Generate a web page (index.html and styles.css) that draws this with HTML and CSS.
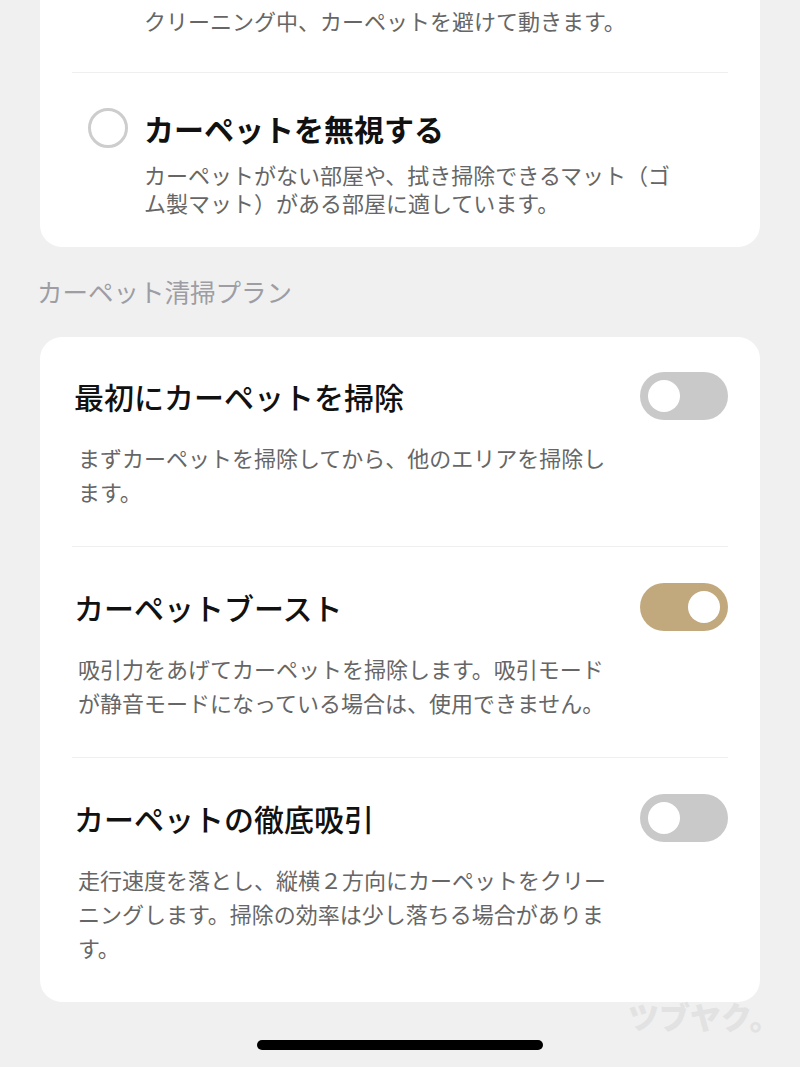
FILE: index.html
```html
<!DOCTYPE html>
<html lang="ja">
<head>
  <meta charset="utf-8">
  <title>カーペット設定</title>
  <link rel="stylesheet" href="styles.css">
</head>
<body>

  <div class="card card-cut">
    <div class="radio-row radio-row-cut">
      <span></span>
      <p class="radio-desc">クリーニング中、カーペットを避けて動きます。</p>
    </div>
    <div class="radio-row radio-row-last">
      <span class="radio"></span>
      <div class="radio-title">カーペットを無視する</div>
      <p class="radio-desc radio-desc-under">カーペットがない部屋や、拭き掃除できるマット（ゴム製マット）がある部屋に適しています。</p>
    </div>
  </div>

  <h2 class="section-label">カーペット清掃プラン</h2>

  <div class="card">
    <div class="row">
      <div class="row-head">
        <span class="row-title">最初にカーペットを掃除</span>
        <span class="toggle"><span class="knob"></span></span>
      </div>
      <p class="row-desc">まずカーペットを掃除してから、他のエリアを掃除します。</p>
    </div>
    <div class="row">
      <div class="row-head">
        <span class="row-title">カーペットブースト</span>
        <span class="toggle toggle-on"><span class="knob"></span></span>
      </div>
      <p class="row-desc">吸引力をあげてカーペットを掃除します。吸引モードが静音モードになっている場合は、使用できません。</p>
    </div>
    <div class="row">
      <div class="row-head">
        <span class="row-title">カーペットの徹底吸引</span>
        <span class="toggle"><span class="knob"></span></span>
      </div>
      <p class="row-desc">走行速度を落とし、縦横２方向にカーペットをクリーニングします。掃除の効率は少し落ちる場合があります。</p>
    </div>
  </div>

  <div class="home-bar"></div>

  <div class="watermark">ツブヤク。</div>

</body>
</html>
```

FILE: styles.css
```css
body {
  margin: 0;
  background-color: #f0f0f0;
  font-family: "Noto Sans CJK JP", "Noto Sans", sans-serif;
  position: relative;
  min-height: 1067px;
}

p {
  margin: 0;
}

.card {
  background-color: #ffffff;
  margin: 0 40px;
  border-radius: 22px;
}

.card-cut {
  border-radius: 0 0 22px 22px;
}

/* lista de opciones con radio */

.radio-row {
  margin: 0 32px;
  padding: 35px 0 31px 16px;
  display: grid;
  grid-template-columns: 40px 1fr;
  column-gap: 16px;
  align-items: center;
}

.radio-row-cut {
  padding: 6px 0 38px 16px;
  border-bottom: 1px solid #efefef;
}

.radio {
  width: 34px;
  height: 34px;
  border: 3px solid #cdcdcd;
  border-radius: 50%;
}

.radio-title {
  font-size: 30px;
  font-weight: 700;
  line-height: 40px;
  color: #111;
}

.radio-desc {
  font-size: 22px;
  line-height: 28px;
  color: #666;
  width: 540px;
}

.radio-desc-under {
  grid-column: 2;
  margin-top: 12px;
}

.section-label {
  margin: 28px 0 30px 37px;
  font-size: 25.5px;
  font-weight: 400;
  line-height: 32px;
  color: #9d9da3;
}

/* filas con interruptor */

.row {
  margin: 0 32px;
  padding: 36px 0 38px;
  border-top: 1px solid #efefef;
}

.row:first-child {
  padding-top: 35px;
  border-top: none;
}

.row-head {
  display: flex;
  justify-content: space-between;
  align-items: center;
  height: 48px;
}

.row-title {
  font-size: 30px;
  font-weight: 500;
  color: #111;
  padding-left: 2px;
}

.row-desc {
  margin-top: 20px;
  padding-left: 6px;
  width: 540px;
  font-size: 22px;
  line-height: 34px;
  color: #666;
}

.toggle {
  width: 88px;
  height: 48px;
  box-sizing: border-box;
  padding: 8px;
  border-radius: 24px;
  background-color: #c9c9c9;
  display: flex;
  align-items: center;
}

.toggle-on {
  background-color: #c1a97d;
  justify-content: flex-end;
}

.knob {
  width: 32px;
  height: 32px;
  border-radius: 50%;
  background-color: #ffffff;
}

.home-bar {
  width: 286px;
  height: 10px;
  margin: 38px auto 0;
  border-radius: 5px;
  background-color: #000;
}

.watermark {
  position: absolute;
  left: 628px;
  top: 996px;
  font-size: 31px;
  font-weight: 900;
  color: #e2e2e2;
  line-height: 40px;
}
```
